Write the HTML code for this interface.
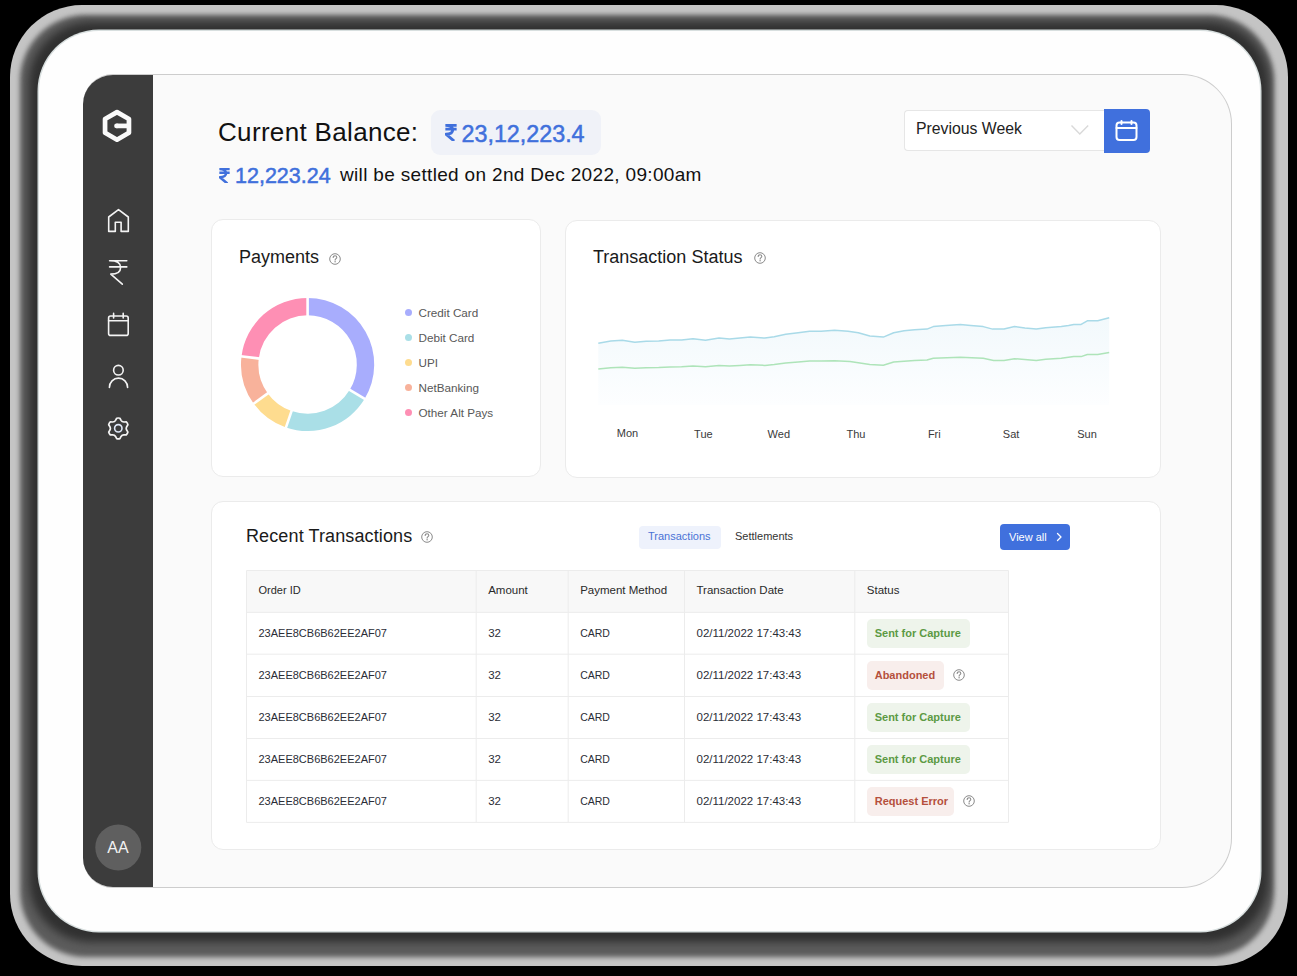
<!DOCTYPE html><html><head><meta charset="utf-8"><style>
*{margin:0;padding:0;box-sizing:border-box}
html,body{width:1297px;height:976px;overflow:hidden;background:#000;font-family:"Liberation Sans",sans-serif;color:#1a1a1a}
.a{position:absolute;white-space:nowrap}
#ring{left:10px;top:5px;width:1278px;height:961px;border-radius:72px;background:#c4c4c4}
#ringd{left:20px;top:15px;width:1254px;height:942px;border-radius:66px;background:#5c5c5c;filter:blur(2.5px)}
#ringd2{left:29px;top:22px;width:1240px;height:920px;border-radius:62px;background:#303030;filter:blur(4px)}
#frame{left:38.5px;top:30.5px;width:1221.5px;height:900.5px;border-radius:60px;background:#fefefe;box-shadow:0 0 0 1.5px #d8dfdf}
#screen{left:83px;top:74px;width:1149px;height:813.5px;border-radius:30px 50px 50px 30px;background:#fafafa;border:1px solid #cdcdcd;border-left:none;overflow:hidden}
#side{left:0;top:0;width:69.5px;height:812.5px;background:#3c3c3c}
.card{position:absolute;background:#fff;border:1px solid #ebebeb;border-radius:12px}
</style></head><body><div id="ring" class="a"></div><div id="ringd" class="a"></div><div id="ringd2" class="a"></div><div id="frame" class="a"></div>
<div id="screen" class="a"><div id="side" class="a"></div></div>
<svg class="a" style="left:0;top:0" width="1297" height="976">
<g fill="none" stroke="#fafafa" stroke-width="4.7" stroke-linejoin="round" stroke-linecap="round">
<polygon points="117,112.1 128.95,119.0 128.95,132.8 117,139.7 105.05,132.8 105.05,119.0"/>
<line x1="116.5" y1="125.9" x2="128" y2="125.9" stroke-linecap="butt"/>
<line x1="116.5" y1="125.9" x2="117" y2="125.9"/>
</g>
<g fill="none" stroke="#f4f4f4" stroke-width="1.6" stroke-linejoin="round" stroke-linecap="round">
<path d="M108.7,231.4 V217 L118.5,209.6 L128.3,217 V231.4 H121.1 V222.3 H115.3 V231.4 Z"/>
<path d="M109.6,260.8 H126.8 M109.6,266.9 H126.8 M110,260.8 C116.5,260.8 120.6,263.3 120.6,267.4 C120.6,271.6 116.8,274.1 110.8,274.1 L122.3,284.2"/>
<rect x="108.6" y="316" width="19.6" height="19.4" rx="2"/>
<path d="M108.6,320.8 H128.2 M113.6,313.4 V318 M123.2,313.4 V318"/>
<circle cx="118.4" cy="370.2" r="4.8"/>
<path d="M109.4,387.4 A9.1,9.3 0 0 1 127.6,387.4"/>
<path d="M114.35,421.56 Q115.05,421.09 115.53,420.36 L116.69,418.23 Q118.30,417.80 119.91,418.23 L121.07,420.36 Q121.55,421.09 122.25,421.56 Q123.00,421.93 123.88,421.98 L126.30,421.92 Q127.48,423.10 127.92,424.71 L126.64,426.78 Q126.26,427.56 126.20,428.40 Q126.26,429.24 126.64,430.02 L127.92,432.09 Q127.48,433.70 126.30,434.88 L123.88,434.82 Q123.00,434.87 122.25,435.24 Q121.55,435.71 121.07,436.44 L119.91,438.57 Q118.30,439.00 116.69,438.57 L115.53,436.44 Q115.05,435.71 114.35,435.24 Q113.60,434.87 112.72,434.82 L110.30,434.88 Q109.12,433.70 108.68,432.09 L109.96,430.02 Q110.34,429.24 110.40,428.40 Q110.34,427.56 109.96,426.78 L108.68,424.71 Q109.12,423.10 110.30,421.92 L112.72,421.98 Q113.60,421.93 114.35,421.56 Z" stroke-width="1.7"/>
<circle cx="118.3" cy="428.3" r="3.7" stroke="#dfe8f8" stroke-width="1.6"/>
</g>
<circle cx="118.3" cy="847.4" r="23" fill="#5f5f5f"/>
</svg>
<div class="a" style="left:95px;top:839px;width:46px;text-align:center;font-size:16px;line-height:18px;color:#f2f2f2">AA</div>

<div class="a" style="left:218px;top:117px;font-size:26px;color:#111;line-height:30px;letter-spacing:0.33px">Current Balance:</div>
<div class="a" style="left:431px;top:110px;width:170px;height:45px;border-radius:9px;background:#f0f2f8"></div>
<svg class="a" style="left:444.5px;top:124px" width="12" height="17.4" viewBox="0 0 10 14.5"><g fill="none" stroke="#4070dc" stroke-width="2.4" stroke-linecap="butt" stroke-linejoin="round"><path d="M0.3,1 H9.7 M0.3,4.3 H9.7 M0.3,1 C4.5,1 6.4,2.6 6.4,4.9 C6.4,7.3 4.4,8.4 0.8,8.4 L7.6,14.2"/></g></svg>
<div class="a" style="left:461.5px;top:120px;font-size:23.3px;color:#4070dc;line-height:28px;-webkit-text-stroke:0.5px #4070dc">23,12,223.4</div>
<svg class="a" style="left:218.5px;top:167.5px" width="11" height="15.9" viewBox="0 0 10 14.5"><g fill="none" stroke="#4070dc" stroke-width="2.3" stroke-linecap="butt" stroke-linejoin="round"><path d="M0.3,1 H9.7 M0.3,4.3 H9.7 M0.3,1 C4.5,1 6.4,2.6 6.4,4.9 C6.4,7.3 4.4,8.4 0.8,8.4 L7.6,14.2"/></g></svg>
<div class="a" style="left:235px;top:164px;font-size:21.5px;color:#4070dc;line-height:24px;-webkit-text-stroke:0.5px #4070dc">12,223.24</div>
<div class="a" style="left:340px;top:162.5px;font-size:19px;color:#111;line-height:24px;letter-spacing:0.33px">will be settled on 2nd Dec 2022, 09:00am</div>
<div class="a" style="left:904px;top:109.5px;width:201px;height:41px;border:1px solid #e6e6e6;border-right:none;border-radius:4px 0 0 4px;background:#fff"></div>
<div class="a" style="left:916px;top:119px;font-size:15.8px;color:#222;line-height:20px">Previous Week</div>
<svg class="a" style="left:1070px;top:124px" width="20" height="12" viewBox="0 0 20 12"><path d="M1.5,1.5 L9.8,10 L18.2,1.5" fill="none" stroke="#d9d9d9" stroke-width="1.4"/></svg>
<div class="a" style="left:1103.5px;top:108.5px;width:46.5px;height:44px;border-radius:0 4px 4px 0;background:#4070dd"></div>
<svg class="a" style="left:1110px;top:116px" width="34" height="30" viewBox="0 0 34 30"><g fill="none" stroke="#fff" stroke-width="2" stroke-linecap="round"><rect x="6.5" y="6.5" width="20" height="17.5" rx="3"/><path d="M6.5,12 H26.5 M11.5,5 V8 M21.5,5 V8"/></g></svg>

<div class="card" style="left:211px;top:219px;width:330px;height:258px"></div>
<div class="card" style="left:565px;top:219.5px;width:596px;height:258px"></div>
<div class="card" style="left:211px;top:500.5px;width:950px;height:349px"></div>
<div class="a" style="left:239px;top:246px;font-size:18px;line-height:22px;color:#1a1a1a">Payments</div><svg class="a" style="left:328.5px;top:252.5px" width="12" height="12" viewBox="0 0 12 12"><circle cx="6" cy="6" r="5.3" fill="none" stroke="#8a8a8a" stroke-width="1"/><path d="M4.2,4.5 C4.2,3.4 5,2.8 6,2.8 C7.1,2.8 7.8,3.5 7.8,4.4 C7.8,5.6 6.1,5.8 6.1,7.1" fill="none" stroke="#8a8a8a" stroke-width="1.1" stroke-linecap="round"/><circle cx="6.1" cy="8.8" r="0.7" fill="#8a8a8a"/></svg>
<div class="a" style="left:593px;top:246px;font-size:18px;line-height:22px;color:#1a1a1a">Transaction Status</div><svg class="a" style="left:753.5px;top:252px" width="12" height="12" viewBox="0 0 12 12"><circle cx="6" cy="6" r="5.3" fill="none" stroke="#8a8a8a" stroke-width="1"/><path d="M4.2,4.5 C4.2,3.4 5,2.8 6,2.8 C7.1,2.8 7.8,3.5 7.8,4.4 C7.8,5.6 6.1,5.8 6.1,7.1" fill="none" stroke="#8a8a8a" stroke-width="1.1" stroke-linecap="round"/><circle cx="6.1" cy="8.8" r="0.7" fill="#8a8a8a"/></svg>
<div class="a" style="left:246px;top:524.5px;font-size:18px;line-height:22px;color:#1a1a1a;letter-spacing:0.12px">Recent Transactions</div><svg class="a" style="left:421px;top:530.5px" width="12" height="12" viewBox="0 0 12 12"><circle cx="6" cy="6" r="5.3" fill="none" stroke="#8a8a8a" stroke-width="1"/><path d="M4.2,4.5 C4.2,3.4 5,2.8 6,2.8 C7.1,2.8 7.8,3.5 7.8,4.4 C7.8,5.6 6.1,5.8 6.1,7.1" fill="none" stroke="#8a8a8a" stroke-width="1.1" stroke-linecap="round"/><circle cx="6.1" cy="8.8" r="0.7" fill="#8a8a8a"/></svg>
<svg class="a" style="left:0;top:0" width="1297" height="976"><path d="M307.60,297.90 A66.6,66.6 0 0 1 364.69,398.80 L349.77,389.84 A49.2,49.2 0 0 0 307.60,315.30Z" fill="#a8adfd"/><path d="M364.69,398.80 A66.6,66.6 0 0 1 285.92,427.47 L291.58,411.02 A49.2,49.2 0 0 0 349.77,389.84Z" fill="#aadfe7"/><path d="M285.92,427.47 A66.6,66.6 0 0 1 253.72,403.65 L267.80,393.42 A49.2,49.2 0 0 0 291.58,411.02Z" fill="#fedc8f"/><path d="M253.72,403.65 A66.6,66.6 0 0 1 241.50,356.38 L258.77,358.50 A49.2,49.2 0 0 0 267.80,393.42Z" fill="#f8b29b"/><path d="M241.50,356.38 A66.6,66.6 0 0 1 307.60,297.90 L307.60,315.30 A49.2,49.2 0 0 0 258.77,358.50Z" fill="#fe8fb4"/><line x1="307.60" y1="318.30" x2="307.60" y2="294.90" stroke="#fff" stroke-width="2.6"/><line x1="347.20" y1="388.29" x2="367.26" y2="400.35" stroke="#fff" stroke-width="2.6"/><line x1="292.56" y1="408.18" x2="284.94" y2="430.31" stroke="#fff" stroke-width="2.6"/><line x1="270.22" y1="391.66" x2="251.29" y2="405.41" stroke="#fff" stroke-width="2.6"/><line x1="261.74" y1="358.87" x2="238.52" y2="356.02" stroke="#fff" stroke-width="2.6"/></svg>
<div class="a" style="left:405px;top:309.2px;width:7px;height:7px;border-radius:50%;background:#a8adfd"></div>
<div class="a" style="left:418.5px;top:304.7px;font-size:11.7px;line-height:16px;color:#585858">Credit Card</div>
<div class="a" style="left:405px;top:334.2px;width:7px;height:7px;border-radius:50%;background:#aadfe7"></div>
<div class="a" style="left:418.5px;top:329.7px;font-size:11.7px;line-height:16px;color:#585858">Debit Card</div>
<div class="a" style="left:405px;top:359.2px;width:7px;height:7px;border-radius:50%;background:#fedc8f"></div>
<div class="a" style="left:418.5px;top:354.7px;font-size:11.7px;line-height:16px;color:#585858">UPI</div>
<div class="a" style="left:405px;top:384.2px;width:7px;height:7px;border-radius:50%;background:#f8b29b"></div>
<div class="a" style="left:418.5px;top:379.7px;font-size:11.7px;line-height:16px;color:#585858">NetBanking</div>
<div class="a" style="left:405px;top:409.2px;width:7px;height:7px;border-radius:50%;background:#fe8fb4"></div>
<div class="a" style="left:418.5px;top:404.7px;font-size:11.7px;line-height:16px;color:#585858">Other Alt Pays</div>
<svg class="a" style="left:0;top:0" width="1297" height="976">
<defs><linearGradient id="ag" x1="0" y1="0" x2="0" y2="1"><stop offset="0" stop-color="#f2f9fc"/><stop offset="1" stop-color="#fdfeff"/></linearGradient></defs>
<path d="M598.3,343.3 L610.8,341 L622.3,340.2 L634.8,342.3 L646.2,341.2 L658.7,341 L670.1,340 L681.6,340 L693,338.7 L705.5,340.2 L719,337.9 L729.5,338.9 L739.9,337.9 L750.3,337 L764.9,338.1 L774.2,336.8 L785.7,334.3 L798.2,332.7 L809.6,331.2 L821.1,331.2 L834.6,330.2 L848.1,331.2 L858.3,332.7 L869.8,336 L883.3,337.1 L893.7,332.7 L904.1,330.8 L914.5,329.8 L927,329.1 L933.3,326.6 L945.8,325.6 L960.3,324.6 L970.7,325.6 L983.2,326.6 L992.6,329.1 L1004,329.1 L1014.5,326.6 L1024.9,328.1 L1036.3,329.1 L1045.7,327.7 L1061.3,326.6 L1068.6,325.6 L1073.8,324.4 L1081.1,324.4 L1087.3,320.8 L1097.7,320.8 L1109.2,317.7 L1109.2,405 L598.3,405Z" fill="url(#ag)"/>
<polyline points="598.3,343.3 610.8,341 622.3,340.2 634.8,342.3 646.2,341.2 658.7,341 670.1,340 681.6,340 693,338.7 705.5,340.2 719,337.9 729.5,338.9 739.9,337.9 750.3,337 764.9,338.1 774.2,336.8 785.7,334.3 798.2,332.7 809.6,331.2 821.1,331.2 834.6,330.2 848.1,331.2 858.3,332.7 869.8,336 883.3,337.1 893.7,332.7 904.1,330.8 914.5,329.8 927,329.1 933.3,326.6 945.8,325.6 960.3,324.6 970.7,325.6 983.2,326.6 992.6,329.1 1004,329.1 1014.5,326.6 1024.9,328.1 1036.3,329.1 1045.7,327.7 1061.3,326.6 1068.6,325.6 1073.8,324.4 1081.1,324.4 1087.3,320.8 1097.7,320.8 1109.2,317.7" fill="none" stroke="#a9dae8" stroke-width="1.5" stroke-linejoin="round"/>
<polyline points="598.3,369.1 610.8,367.8 622.3,367.2 634.8,368.3 646.2,367.8 658.7,367.6 670.1,367 681.6,366.8 693,366 705.5,366.8 719,365.4 729.5,366 739.9,365.4 750.3,364.8 764.9,365.4 774.2,364.6 785.7,363 798.2,362 809.6,361 821.1,361 834.6,360.8 850,361.4 869.8,364.5 883.3,365.2 893.7,362 914.5,360.4 927,360 933.3,358.3 960.3,357.2 983.2,358.3 993.6,360.4 1004,360.4 1014.5,358.7 1036.3,360.4 1045.7,359.3 1061.3,358.3 1073.8,356.6 1081.1,356.6 1087.3,354.5 1097.7,354.5 1109.2,352.5" fill="none" stroke="#aee4b9" stroke-width="1.5" stroke-linejoin="round"/>
</svg>
<div class="a" style="left:597.5px;top:426px;width:60px;text-align:center;font-size:11px;line-height:14px;color:#3a3a3a">Mon</div>
<div class="a" style="left:673.4px;top:426.6px;width:60px;text-align:center;font-size:11px;line-height:14px;color:#3a3a3a">Tue</div>
<div class="a" style="left:748.8px;top:426.6px;width:60px;text-align:center;font-size:11px;line-height:14px;color:#3a3a3a">Wed</div>
<div class="a" style="left:826px;top:426.6px;width:60px;text-align:center;font-size:11px;line-height:14px;color:#3a3a3a">Thu</div>
<div class="a" style="left:904.3px;top:426.6px;width:60px;text-align:center;font-size:11px;line-height:14px;color:#3a3a3a">Fri</div>
<div class="a" style="left:981.1px;top:426.6px;width:60px;text-align:center;font-size:11px;line-height:14px;color:#3a3a3a">Sat</div>
<div class="a" style="left:1057px;top:426.6px;width:60px;text-align:center;font-size:11px;line-height:14px;color:#3a3a3a">Sun</div>
<div class="a" style="left:639px;top:525.5px;width:82px;height:23px;border-radius:4px;background:#eef2fc"></div>
<div class="a" style="left:648px;top:529px;font-size:11px;line-height:14px;color:#4a72d6">Transactions</div>
<div class="a" style="left:735px;top:529px;font-size:11px;line-height:14px;color:#333">Settlements</div>
<div class="a" style="left:1000px;top:524px;width:70px;height:26px;border-radius:4px;background:#4070dd"></div>
<div class="a" style="left:1009px;top:529.5px;font-size:11px;line-height:14px;color:#fff">View all</div>
<svg class="a" style="left:1054px;top:531px" width="10" height="12"><path d="M3.5,2.5 L7,6 L3.5,9.5" fill="none" stroke="#fff" stroke-width="1.3" stroke-linecap="round" stroke-linejoin="round"/></svg>
<div class="a" style="left:246.5px;top:570.5px;width:762.0px;height:41.89999999999998px;background:#f8f8f8"></div>
<svg class="a" style="left:0;top:0" width="1297" height="976"><line x1="246.5" y1="570.5" x2="246.5" y2="822.4" stroke="#ececec" stroke-width="1"/><line x1="476.2" y1="570.5" x2="476.2" y2="822.4" stroke="#ececec" stroke-width="1"/><line x1="568.2" y1="570.5" x2="568.2" y2="822.4" stroke="#ececec" stroke-width="1"/><line x1="684.5" y1="570.5" x2="684.5" y2="822.4" stroke="#ececec" stroke-width="1"/><line x1="854.8" y1="570.5" x2="854.8" y2="822.4" stroke="#ececec" stroke-width="1"/><line x1="1008.5" y1="570.5" x2="1008.5" y2="822.4" stroke="#ececec" stroke-width="1"/><line x1="246.5" y1="570.5" x2="1008.5" y2="570.5" stroke="#ececec" stroke-width="1"/><line x1="246.5" y1="612.4" x2="1008.5" y2="612.4" stroke="#ececec" stroke-width="1"/><line x1="246.5" y1="654.2" x2="1008.5" y2="654.2" stroke="#ececec" stroke-width="1"/><line x1="246.5" y1="696.5" x2="1008.5" y2="696.5" stroke="#ececec" stroke-width="1"/><line x1="246.5" y1="738.5" x2="1008.5" y2="738.5" stroke="#ececec" stroke-width="1"/><line x1="246.5" y1="780.4" x2="1008.5" y2="780.4" stroke="#ececec" stroke-width="1"/><line x1="246.5" y1="822.4" x2="1008.5" y2="822.4" stroke="#ececec" stroke-width="1"/></svg>
<div class="a" style="left:258.5px;top:582.5px;font-size:11px;line-height:14px;color:#2a2a2a">Order ID</div>
<div class="a" style="left:488.2px;top:582.5px;font-size:11.5px;line-height:14px;color:#2a2a2a">Amount</div>
<div class="a" style="left:580.2px;top:582.5px;font-size:11.5px;line-height:14px;color:#2a2a2a">Payment Method</div>
<div class="a" style="left:696.5px;top:582.5px;font-size:11.5px;line-height:14px;color:#2a2a2a">Transaction Date</div>
<div class="a" style="left:866.8px;top:582.5px;font-size:11.5px;line-height:14px;color:#2a2a2a">Status</div>
<div class="a" style="left:258.5px;top:626.1px;font-size:11px;line-height:14px;color:#2a2d36">23AEE8CB6B62EE2AF07</div>
<div class="a" style="left:488.2px;top:626.1px;font-size:11.5px;line-height:14px;color:#2a2d36">32</div>
<div class="a" style="left:580.2px;top:626.1px;font-size:10.5px;line-height:14px;color:#2a2d36">CARD</div>
<div class="a" style="left:696.5px;top:626.1px;font-size:11.5px;line-height:14px;color:#2a2d36">02/11/2022 17:43:43</div>
<div class="a" style="left:866.7px;top:619.0px;width:103.1px;height:28.6px;padding:0 0 0 8px;border-radius:5px;background:#eef4eb;color:#5c9a44;font-size:11px;line-height:28.6px;font-weight:bold">Sent for Capture</div>
<div class="a" style="left:258.5px;top:668.1px;font-size:11px;line-height:14px;color:#2a2d36">23AEE8CB6B62EE2AF07</div>
<div class="a" style="left:488.2px;top:668.1px;font-size:11.5px;line-height:14px;color:#2a2d36">32</div>
<div class="a" style="left:580.2px;top:668.1px;font-size:10.5px;line-height:14px;color:#2a2d36">CARD</div>
<div class="a" style="left:696.5px;top:668.1px;font-size:11.5px;line-height:14px;color:#2a2d36">02/11/2022 17:43:43</div>
<div class="a" style="left:866.7px;top:661.1px;width:77.1px;height:28.6px;padding:0 0 0 8px;border-radius:5px;background:#f8eeec;color:#b5503c;font-size:11px;line-height:28.6px;font-weight:bold">Abandoned</div>
<svg class="a" style="left:953px;top:669.35px" width="12" height="12" viewBox="0 0 12 12"><circle cx="6" cy="6" r="5.3" fill="none" stroke="#8a8a8a" stroke-width="1"/><path d="M4.2,4.5 C4.2,3.4 5,2.8 6,2.8 C7.1,2.8 7.8,3.5 7.8,4.4 C7.8,5.6 6.1,5.8 6.1,7.1" fill="none" stroke="#8a8a8a" stroke-width="1.1" stroke-linecap="round"/><circle cx="6.1" cy="8.8" r="0.7" fill="#8a8a8a"/></svg>
<div class="a" style="left:258.5px;top:710.3px;font-size:11px;line-height:14px;color:#2a2d36">23AEE8CB6B62EE2AF07</div>
<div class="a" style="left:488.2px;top:710.3px;font-size:11.5px;line-height:14px;color:#2a2d36">32</div>
<div class="a" style="left:580.2px;top:710.3px;font-size:10.5px;line-height:14px;color:#2a2d36">CARD</div>
<div class="a" style="left:696.5px;top:710.3px;font-size:11.5px;line-height:14px;color:#2a2d36">02/11/2022 17:43:43</div>
<div class="a" style="left:866.7px;top:703.2px;width:103.1px;height:28.6px;padding:0 0 0 8px;border-radius:5px;background:#eef4eb;color:#5c9a44;font-size:11px;line-height:28.6px;font-weight:bold">Sent for Capture</div>
<div class="a" style="left:258.5px;top:752.2px;font-size:11px;line-height:14px;color:#2a2d36">23AEE8CB6B62EE2AF07</div>
<div class="a" style="left:488.2px;top:752.2px;font-size:11.5px;line-height:14px;color:#2a2d36">32</div>
<div class="a" style="left:580.2px;top:752.2px;font-size:10.5px;line-height:14px;color:#2a2d36">CARD</div>
<div class="a" style="left:696.5px;top:752.2px;font-size:11.5px;line-height:14px;color:#2a2d36">02/11/2022 17:43:43</div>
<div class="a" style="left:866.7px;top:745.2px;width:103.1px;height:28.6px;padding:0 0 0 8px;border-radius:5px;background:#eef4eb;color:#5c9a44;font-size:11px;line-height:28.6px;font-weight:bold">Sent for Capture</div>
<div class="a" style="left:258.5px;top:794.2px;font-size:11px;line-height:14px;color:#2a2d36">23AEE8CB6B62EE2AF07</div>
<div class="a" style="left:488.2px;top:794.2px;font-size:11.5px;line-height:14px;color:#2a2d36">32</div>
<div class="a" style="left:580.2px;top:794.2px;font-size:10.5px;line-height:14px;color:#2a2d36">CARD</div>
<div class="a" style="left:696.5px;top:794.2px;font-size:11.5px;line-height:14px;color:#2a2d36">02/11/2022 17:43:43</div>
<div class="a" style="left:866.7px;top:787.1px;width:87.1px;height:28.6px;padding:0 0 0 8px;border-radius:5px;background:#f8eeec;color:#b5503c;font-size:11px;line-height:28.6px;font-weight:bold">Request Error</div>
<svg class="a" style="left:963px;top:795.4px" width="12" height="12" viewBox="0 0 12 12"><circle cx="6" cy="6" r="5.3" fill="none" stroke="#8a8a8a" stroke-width="1"/><path d="M4.2,4.5 C4.2,3.4 5,2.8 6,2.8 C7.1,2.8 7.8,3.5 7.8,4.4 C7.8,5.6 6.1,5.8 6.1,7.1" fill="none" stroke="#8a8a8a" stroke-width="1.1" stroke-linecap="round"/><circle cx="6.1" cy="8.8" r="0.7" fill="#8a8a8a"/></svg></body></html>
